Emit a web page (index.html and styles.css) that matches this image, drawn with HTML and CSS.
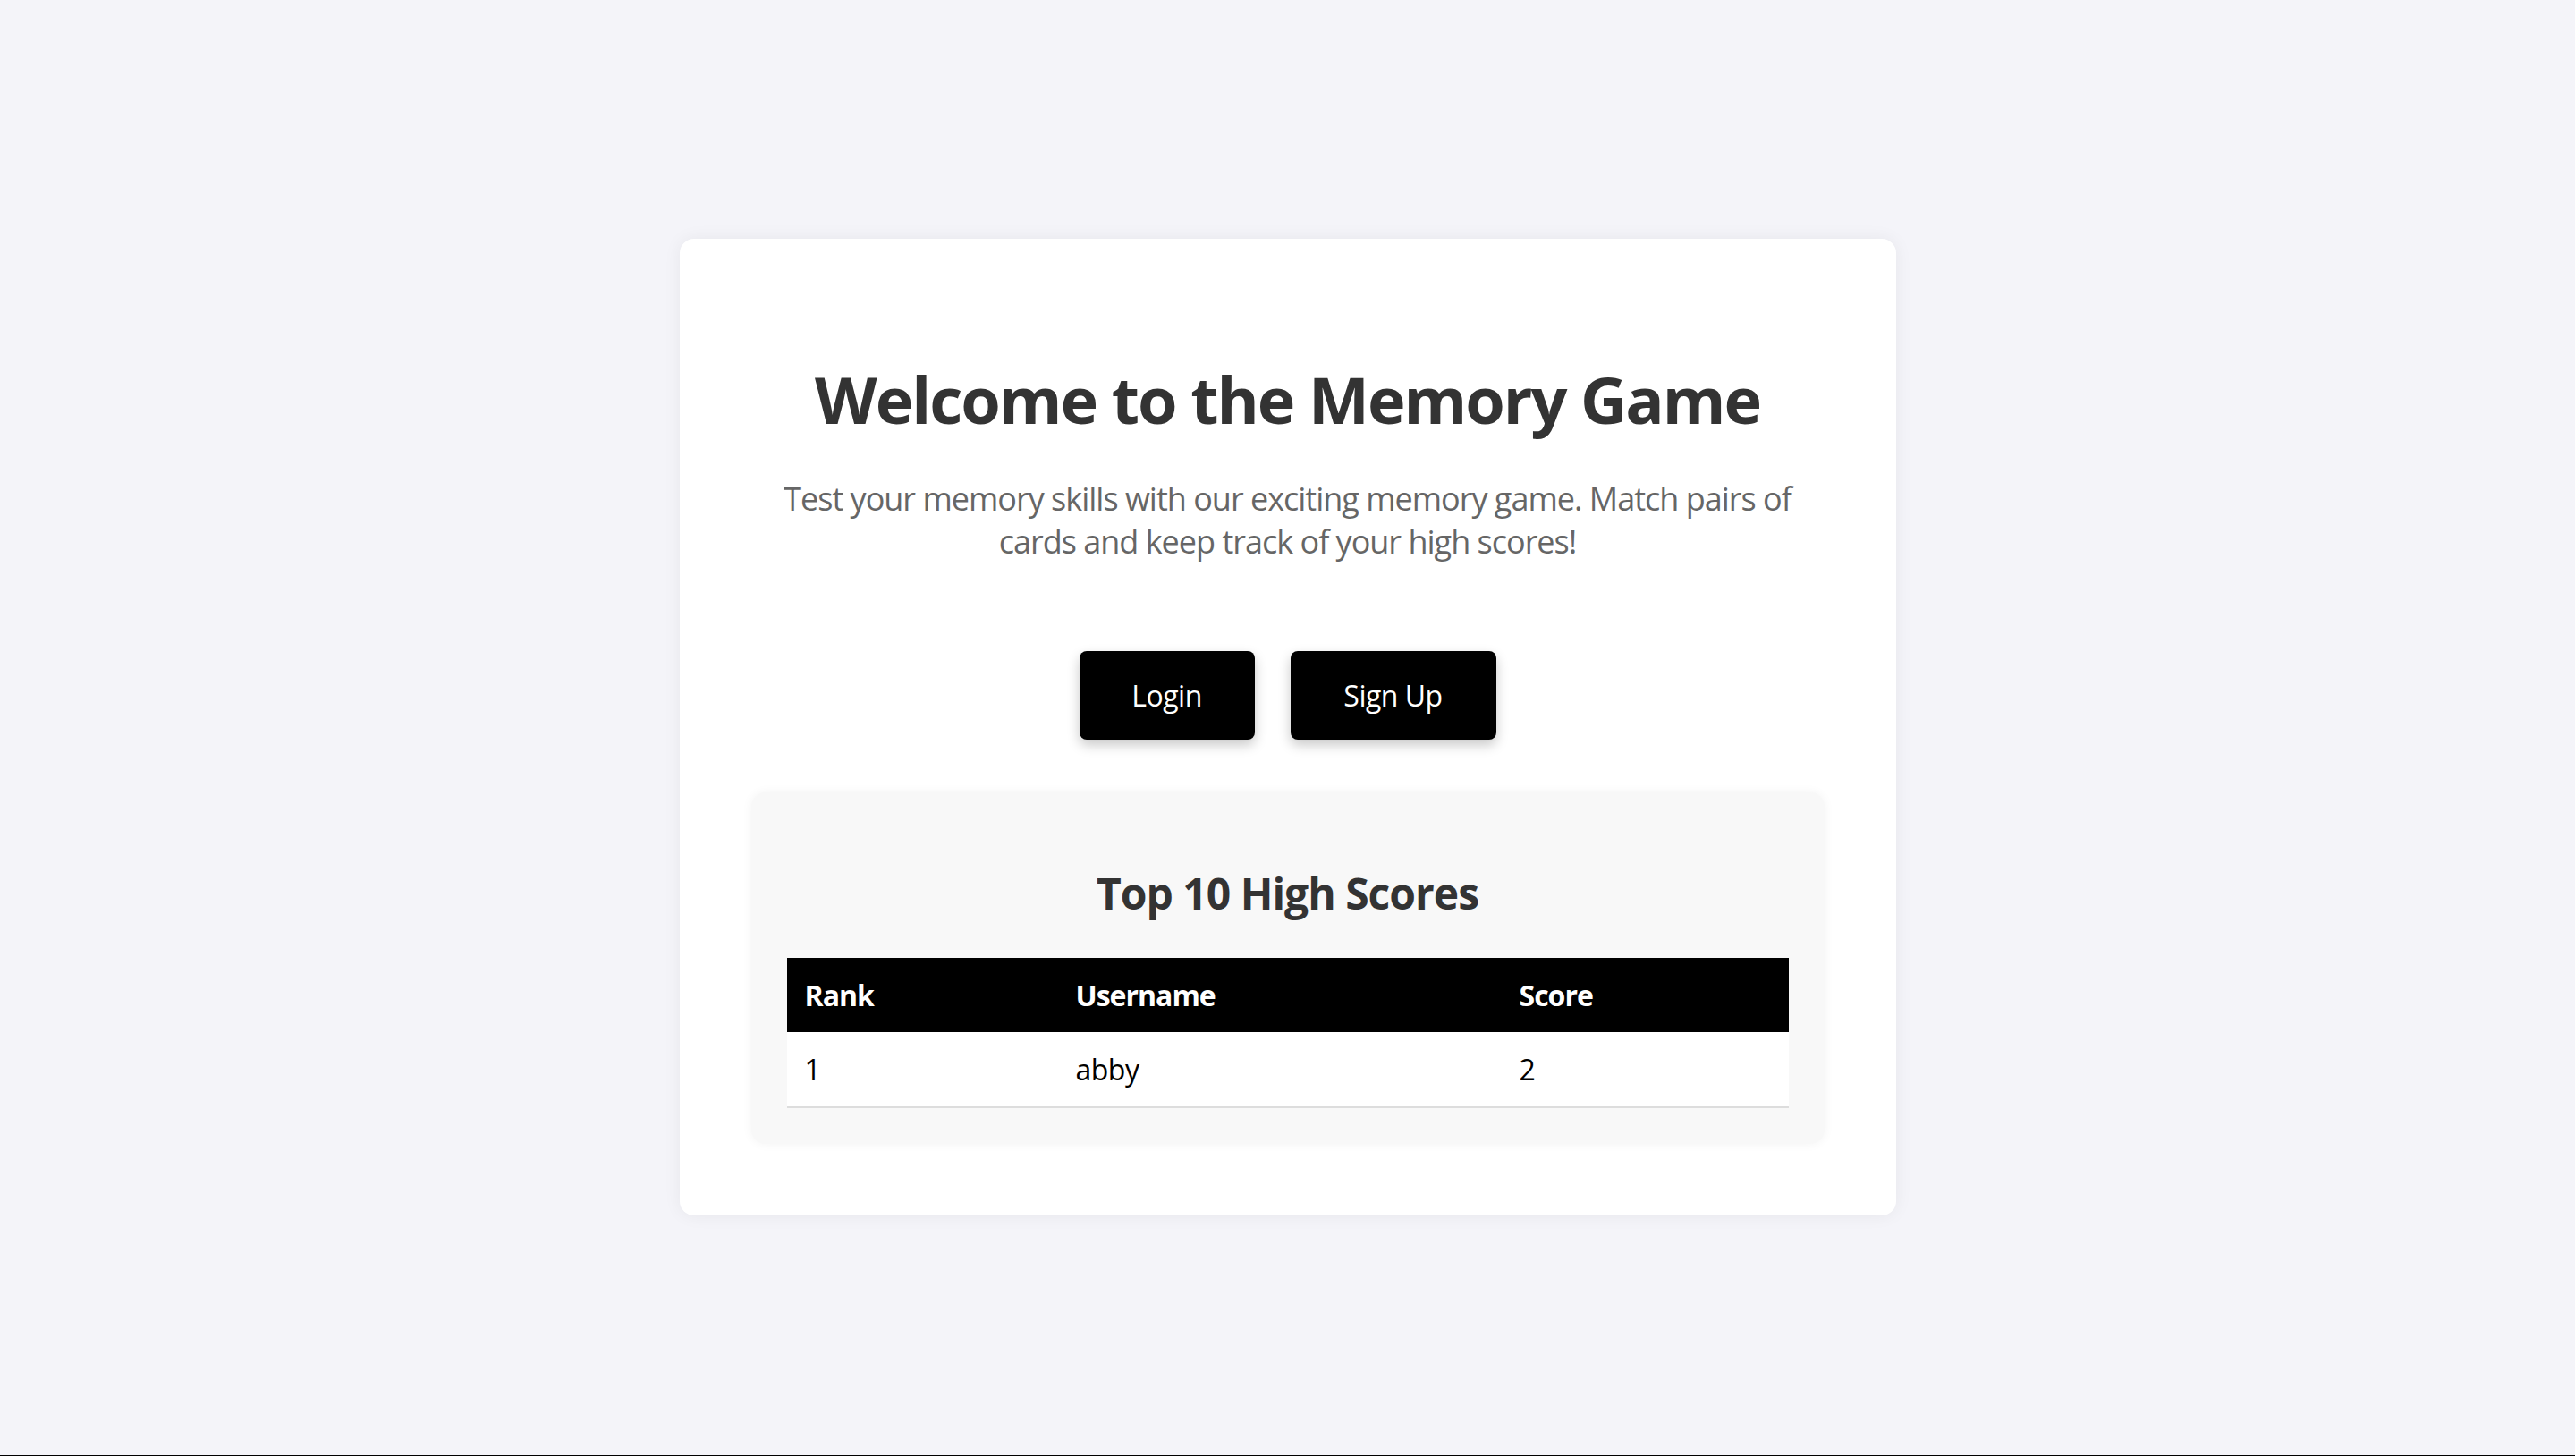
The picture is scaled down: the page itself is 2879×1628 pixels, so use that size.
FILE: index.html
```html
<!DOCTYPE html>
<html lang="en">
<head>
<meta charset="utf-8">
<title>Memory Game</title>
<link rel="stylesheet" href="styles.css">
</head>
<body>
<main class="card">
  <h1 class="title">Welcome to the Memory Game</h1>
  <p class="intro">Test your memory skills with our exciting memory game. Match pairs of cards and keep track of your high scores!</p>
  <div class="actions">
    <button class="btn btn-login">Login</button>
    <button class="btn btn-signup">Sign Up</button>
  </div>
  <section class="scores">
    <h2 class="scores-title">Top 10 High Scores</h2>
    <table class="score-table">
      <colgroup>
        <col class="col-rank">
        <col class="col-user">
        <col class="col-score">
      </colgroup>
      <thead>
        <tr><th>Rank</th><th>Username</th><th>Score</th></tr>
      </thead>
      <tbody>
        <tr><td>1</td><td>abby</td><td>2</td></tr>
      </tbody>
    </table>
  </section>
</main>
</body>
</html>
```

FILE: styles.css
```css
* { box-sizing: border-box; }

html, body { margin: 0; padding: 0; }

body {
  height: 1628px;
  background: #f4f4f9;
  border-bottom: 1px solid #000;
  display: flex;
  align-items: center;
  justify-content: center;
  font-family: "Open Sans", "Noto Sans", "Liberation Sans", sans-serif;
}

.card {
  width: 1360px;
  margin-bottom: 2px;
  padding: 80px;
  background: #ffffff;
  border-radius: 16px;
  box-shadow: 0 0 20px rgba(0, 0, 0, 0.06);
  text-align: center;
}

.title {
  margin: 51px 0 40px;
  font-size: 72px;
  line-height: 96px;
  font-weight: 700;
  color: #333;
  letter-spacing: -2px;
}

.intro {
  margin: 0 auto;
  font-size: 36px;
  line-height: 48px;
  color: #666;
  letter-spacing: -1px;
}

.actions {
  margin-top: 98px;
  display: flex;
  justify-content: center;
  gap: 40px;
}

.btn {
  height: 99px;
  padding: 28px 0;
  border: none;
  border-radius: 8px;
  background: #000;
  color: #fff;
  font-family: inherit;
  font-size: 32px;
  line-height: 43px;
  letter-spacing: -0.5px;
  box-shadow: 0 6px 14px rgba(0, 0, 0, 0.22);
  cursor: pointer;
}

.btn-login { width: 196px; }
.btn-signup { width: 230px; }

.scores {
  margin-top: 59px;
  padding: 40px;
  background: #f8f8f8;
  border-radius: 16px;
  box-shadow: 0 0 12px rgba(0, 0, 0, 0.05);
}

.scores-title {
  margin: 41px 0 40px;
  font-size: 48px;
  line-height: 64px;
  font-weight: 700;
  color: #333;
  letter-spacing: -1px;
}

.score-table {
  width: 100%;
  border-collapse: collapse;
  table-layout: fixed;
  text-align: left;
  font-size: 32px;
  line-height: 43px;
  letter-spacing: -0.5px;
}

.col-rank { width: 303px; }
.col-user { width: 496px; }
.col-score { width: 321px; }

.score-table th {
  padding: 20px;
  background: #000;
  color: #fff;
  font-weight: 700;
  letter-spacing: -1px;
}

.score-table td {
  padding: 20px;
  background: #fff;
  color: #000;
  border-bottom: 2px solid #ddd;
}
```
